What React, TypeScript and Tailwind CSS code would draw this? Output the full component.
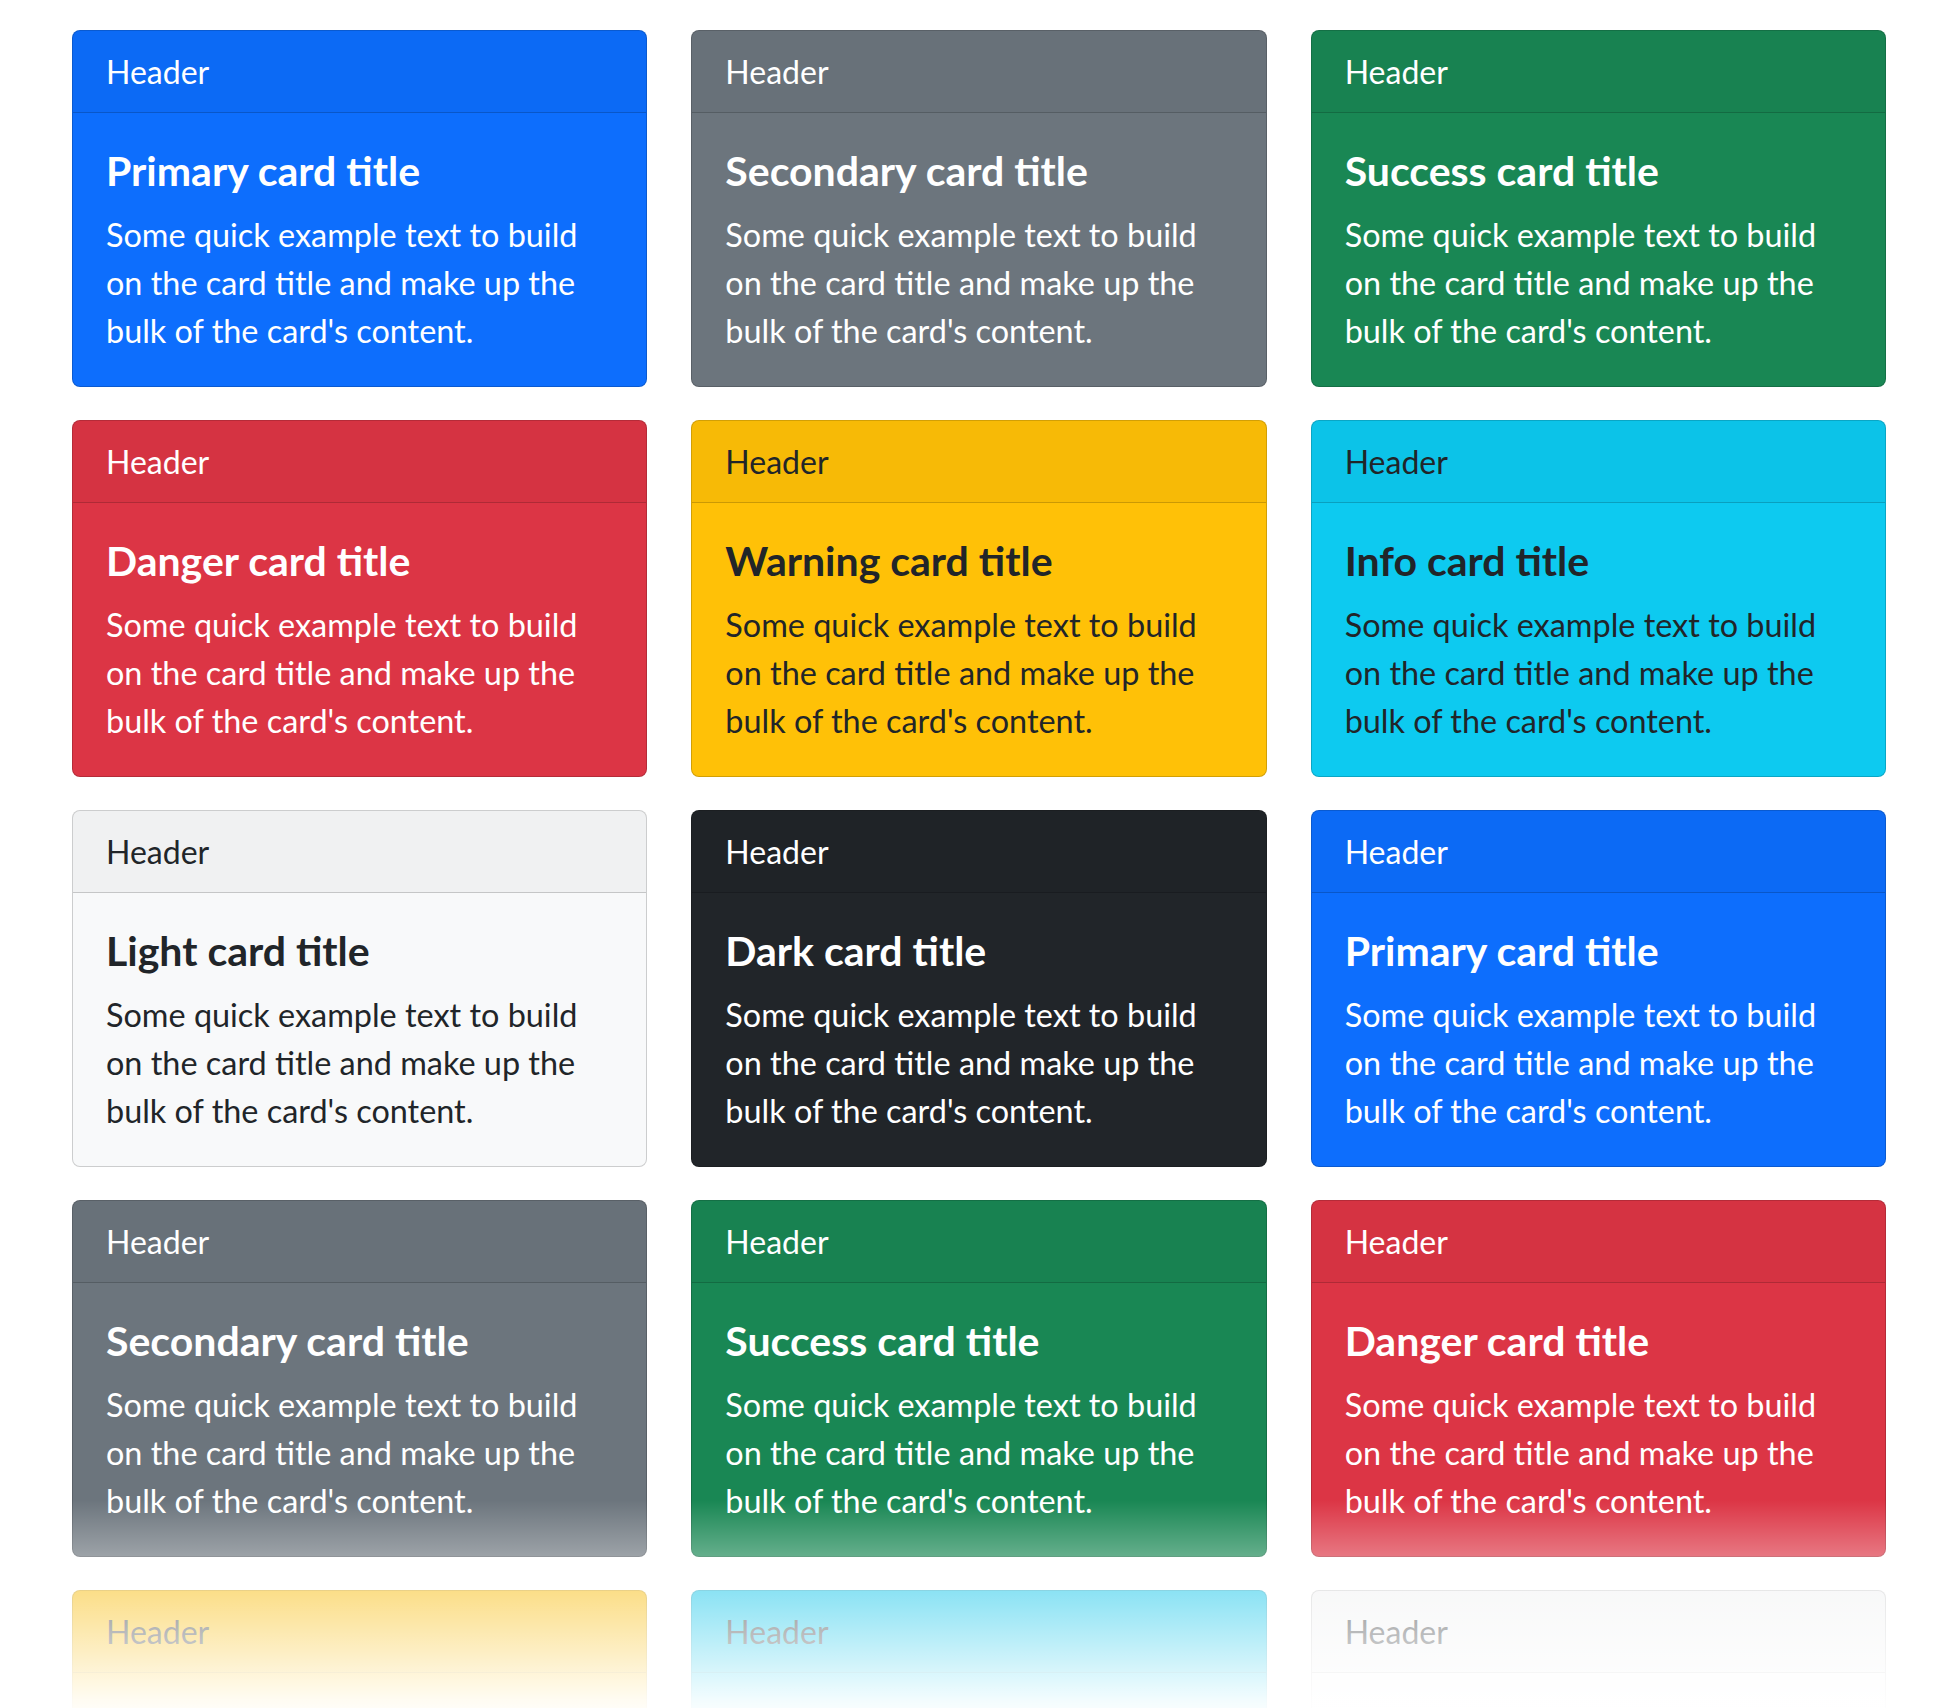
import React from "react";

type Variant = {
  name: string;
  bg: string;
  text: string;
};

const variants: Variant[] = [
  { name: "Primary", bg: "bg-[#0d6efd]", text: "text-white" },
  { name: "Secondary", bg: "bg-[#6c757d]", text: "text-white" },
  { name: "Success", bg: "bg-[#198754]", text: "text-white" },
  { name: "Danger", bg: "bg-[#dc3545]", text: "text-white" },
  { name: "Warning", bg: "bg-[#ffc107]", text: "text-[#212529]" },
  { name: "Info", bg: "bg-[#0dcaf0]", text: "text-[#212529]" },
  { name: "Light", bg: "bg-[#f8f9fa]", text: "text-[#212529]" },
  { name: "Dark", bg: "bg-[#212529]", text: "text-white" },
];

// the page just repeats the palette
const cards = [...variants, ...variants];

const Card = ({ v }: { v: Variant }) => {
  return (
    <div
      className={`flex flex-col overflow-hidden rounded-[8px] border border-black/[0.175] ${v.bg} ${v.text}`}
    >
      <div className="border-b border-black/[0.175] bg-black/[0.03] px-[33px] pt-[17px] pb-[16px] text-[32px] leading-[48px]">
        Header
      </div>
      <div className="px-[33px] pt-[34px] pb-[31px]">
        <h5 className="mb-[16px] text-[41px] font-bold leading-[48px]">
          {v.name} card title
        </h5>
        <p className="text-[32.4px] leading-[48px]">
          Some quick example text to build on the card title and make up the
          bulk of the card's content.
        </p>
      </div>
    </div>
  );
};

export default function App() {
  return (
    <div className="relative h-[1708px] overflow-hidden bg-white font-['Lato','Noto_Sans',sans-serif]">
      <div className="grid grid-cols-3 gap-x-[44px] gap-y-[33px] px-[72px] pt-[30px]">
        {cards.map((v, i) => (
          <Card key={i} v={v} />
        ))}
      </div>
      {/* white fade over the bottom of the viewport */}
      <div className="pointer-events-none absolute inset-x-0 bottom-0 h-[208px] bg-[linear-gradient(to_bottom,rgba(255,255,255,0)_0px,rgba(255,255,255,0.32)_55px,rgba(255,255,255,0.52)_90px,rgba(255,255,255,0.95)_200px,rgba(255,255,255,0.97)_208px)]" />
    </div>
  );
}
